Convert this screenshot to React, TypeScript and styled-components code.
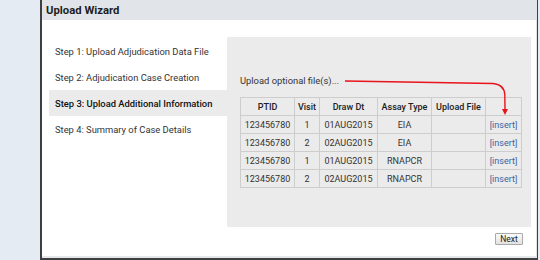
import React from "react";
import styled, { createGlobalStyle } from "styled-components";

const Global = createGlobalStyle`
  html, body { margin: 0; padding: 0; background: #e5ebf2; }
  body { font-family: Roboto, "Liberation Sans", sans-serif; }
  #root { width: 540px; height: 260px; overflow: hidden; }
`;

const Page = styled.div`
  display: flex;
  height: 260px;
  padding-left: 40px;
  box-sizing: border-box;
`;

const Panel = styled.div`
  width: 498px;
  height: 260px;
  box-sizing: border-box;
  border-left: 2px solid #3f3f3f;
  border-right: 1px solid #3f3f3f;
  border-bottom: 2px solid #3f3f3f;
  display: flex;
  flex-direction: column;
  background: #fff;
`;

const Header = styled.div`
  height: 20px;
  background: #e1e5e9;
  display: flex;
  align-items: center;
  padding-left: 4px;
  font-size: 11.3px;
  font-weight: 700;
  color: #1e1e1e;
  flex-shrink: 0;
`;

const Body = styled.div`
  flex: 1;
  display: flex;
  flex-direction: column;
  border-right: 1px solid #e2e2e2;
  border-bottom: 2px solid #e6e9ec;
  padding: 17px 5px 0 7px;
`;

const Main = styled.div`
  display: flex;
`;

const Nav = styled.div`
  width: 178px;
  display: flex;
  flex-direction: column;
  padding-top: 1px;
`;

const NavItem = styled.div<{ $active?: boolean }>`
  height: 26px;
  display: flex;
  align-items: center;
  padding-left: 6px;
  font-size: 9.4px;
  color: ${(p) => (p.$active ? "#111" : "#333")};
  font-weight: ${(p) => (p.$active ? 500 : 400)};
  background: ${(p) => (p.$active ? "#ebebeb" : "transparent")};
`;

const Content = styled.div`
  position: relative;
  width: 304px;
  height: 190px;
  background: #ebebeb;
  padding: 37px 0 0 13px;
  box-sizing: border-box;
`;

const Label = styled.div`
  font-size: 9.4px;
  line-height: 14px;
  color: #333;
`;

const Table = styled.table`
  margin-top: 9px;
  width: 282px;
  border-collapse: collapse;
  table-layout: fixed;
  font-size: 9px;
  color: #333;
`;

const Th = styled.th<{ $w: number }>`
  width: ${(p) => p.$w}px;
  height: 17px;
  padding: 0;
  border: 1px solid #cdcdcd;
  font-weight: 500;
  text-align: center;
  color: #222;
  white-space: nowrap;
  overflow: hidden;
`;

const Td = styled.td`
  height: 17px;
  padding: 0;
  border: 1px solid #cdcdcd;
  text-align: center;
  white-space: nowrap;
  overflow: hidden;
`;

const InsertLink = styled.span`
  color: #3a64a0;
`;

const Arrow = styled.svg`
  position: absolute;
  left: 0;
  top: 0;
  overflow: visible;
  pointer-events: none;
`;

const Footer = styled.div`
  display: flex;
  justify-content: flex-end;
  padding: 6px 8px 0 0;
`;

const Button = styled.button`
  width: 28px;
  height: 12px;
  padding: 0;
  font-family: Roboto, "Liberation Sans", sans-serif;
  font-size: 8.5px;
  color: #222;
  background: linear-gradient(#fafafa, #e2e2e2);
  border: 1px solid #a9a9a9;
  border-radius: 1px;
  line-height: 10px;
`;

const steps = [
  "Step 1: Upload Adjudication Data File",
  "Step 2: Adjudication Case Creation",
  "Step 3: Upload Additional Information",
  "Step 4: Summary of Case Details",
];

const rows = [
  ["123456780", "1", "01AUG2015", "EIA"],
  ["123456780", "2", "02AUG2015", "EIA"],
  ["123456780", "1", "01AUG2015", "RNAPCR"],
  ["123456780", "2", "02AUG2015", "RNAPCR"],
];

const cols: [string, number][] = [
  ["PTID", 54],
  ["Visit", 25],
  ["Draw Dt", 58],
  ["Assay Type", 54],
  ["Upload File", 54],
  ["", 36],
];

export default function App() {
  return (
    <>
      <Global />
      <Page>
        <Panel>
          <Header>Upload Wizard</Header>
          <Body>
            <Main>
              <Nav>
                {steps.map((s, i) => (
                  <NavItem key={s} $active={i === 2}>
                    {s}
                  </NavItem>
                ))}
              </Nav>
              <Content>
                <Label>Upload optional file(s)...</Label>
                <Table>
                  <colgroup>
                    {cols.map(([, w], i) => (
                      <col key={i} style={{ width: w }} />
                    ))}
                  </colgroup>
                  <thead>
                    <tr>
                      {cols.map(([c, w], i) => (
                        <Th key={i} $w={w}>
                          {c}
                        </Th>
                      ))}
                    </tr>
                  </thead>
                  <tbody>
                    {rows.map((r, i) => (
                      <tr key={i}>
                        {r.map((c, j) => (
                          <Td key={j}>{c}</Td>
                        ))}
                        <Td />
                        <Td>
                          <InsertLink>[insert]</InsertLink>
                        </Td>
                      </tr>
                    ))}
                  </tbody>
                </Table>
                <Arrow width="304" height="190">
                  <path
                    d="M118 44 L266 46.5 Q277.5 47.5 277.8 58 L278 72"
                    fill="none"
                    stroke="#e8141b"
                    strokeWidth="1.4"
                  />
                  <polygon points="275,72 281,72 278,78" fill="#e8141b" />
                </Arrow>
              </Content>
            </Main>
            <Footer>
              <Button>Next</Button>
            </Footer>
          </Body>
        </Panel>
      </Page>
    </>
  );
}
